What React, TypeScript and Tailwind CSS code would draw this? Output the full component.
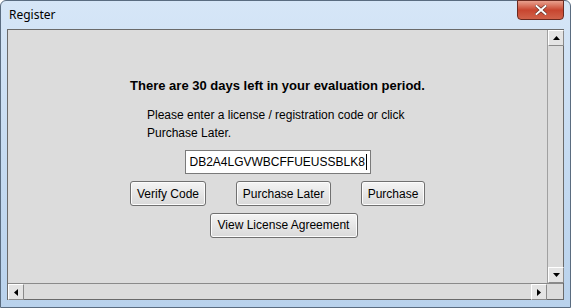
import React from 'react';

const font = { fontFamily: '"Liberation Sans", Arial, sans-serif' };

function ArrowButton({ dir }: { dir: 'up' | 'down' | 'left' | 'right' }) {
  const points =
    dir === 'up'
      ? '0,4 3.5,0 7,4'
      : dir === 'down'
        ? '0,0 7,0 3.5,4'
        : dir === 'left'
          ? '4,0 4,7 0,3.5'
          : '0,0 0,7 4,3.5';
  const vertical = dir === 'up' || dir === 'down';
  return (
    <div className="flex h-[16px] w-[16px] shrink-0 items-center justify-center border border-t-white border-l-white border-r-[#8a8a8a] border-b-[#8a8a8a] bg-[#e4e4e4]">
      <svg width={vertical ? 7 : 4} height={vertical ? 4 : 7} viewBox={vertical ? '0 0 7 4' : '0 0 4 7'}>
        <polygon points={points} fill="#000" />
      </svg>
    </div>
  );
}

function WinButton({ label, w }: { label: string; w: string }) {
  return (
    <button
      className={`h-[25px] ${w} rounded-[3px] border border-[#707070] bg-gradient-to-b from-[#f4f4f4] to-[#d9d9d9] text-[12px] text-black shadow-[inset_0_0_0_1px_#fcfcfc]`}
      style={font}
    >
      {label}
    </button>
  );
}

export default function App() {
  return (
    <div
      className="flex h-[308px] w-[571px] flex-col rounded-t-[6px] border border-[#5a6c80] bg-gradient-to-b from-[#d6e6f7] via-[#c6dbf1] to-[#b9d2ec]"
      style={font}
    >
      <div className="relative flex h-[28px] shrink-0 items-center pl-[8px]">
        <span className="text-[12px] text-black" style={{ fontFamily: '"Noto Sans", "Liberation Sans", sans-serif' }}>
          Register
        </span>
        <div className="absolute right-[6px] top-[-1px] flex h-[20px] w-[47px] items-center justify-center rounded-b-[4px] border border-[#6b2a20] bg-gradient-to-b from-[#e8a08e] via-[#c8452f] to-[#d1624a]">
          <svg width="12" height="10" viewBox="0 0 12 10">
            <path d="M1.5 1 L10.5 9 M10.5 1 L1.5 9" stroke="#5a2a22" strokeWidth="3.2" strokeLinecap="square" />
            <path d="M1.5 1 L10.5 9 M10.5 1 L1.5 9" stroke="#ffffff" strokeWidth="2" strokeLinecap="square" />
          </svg>
        </div>
      </div>

      <div className="mx-[6px] mb-[7px] flex flex-1 flex-col border border-[#6a6a6a] bg-[#dcdcdc]">
        <div className="flex flex-1">
          <div className="flex flex-1 flex-col items-center pt-[48px]">
            <p className="text-[13px] font-bold leading-[15px] text-black">
              There are 30 days left in your evaluation period.
            </p>
            <p className="mt-[13px] ml-[3px] w-[264px] text-[12px] leading-[18px] text-black">
              Please enter a license / registration code or click Purchase Later.
            </p>
            <div className="mt-[8px] flex h-[24px] w-[186px] items-center border border-[#7a7a7a] bg-white pl-[4px] text-[12px] text-black">
              DB2A4LGVWBCFFUEUSSBLK8
              <span className="ml-[1px] h-[16px] w-[1px] bg-black" />
            </div>
            <div className="mt-[7px] flex items-center gap-[30px]">
              <WinButton label="Verify Code" w="w-[76px]" />
              <WinButton label="Purchase Later" w="w-[95px]" />
              <WinButton label="Purchase" w="w-[64px]" />
            </div>
            <div className="mt-[6px] ml-[12px]">
              <WinButton label="View License Agreement" w="w-[148px]" />
            </div>
          </div>
          <div className="flex w-[16px] flex-col justify-between border-l border-[#a0a0a0] bg-[#dcdcdc]">
            <ArrowButton dir="up" />
            <ArrowButton dir="down" />
          </div>
        </div>
        <div className="flex h-[16px] shrink-0 border-t border-[#8a8a8a]">
          <div className="flex flex-1 justify-between">
            <ArrowButton dir="left" />
            <ArrowButton dir="right" />
          </div>
          <div className="w-[16px] bg-[#dcdcdc]" />
        </div>
      </div>
    </div>
  );
}
